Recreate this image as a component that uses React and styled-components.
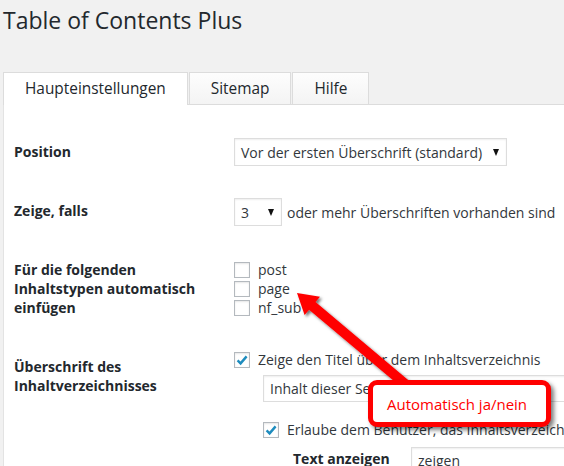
import React from "react";
import styled, { createGlobalStyle } from "styled-components";

const GlobalStyle = createGlobalStyle`
  html, body {
    margin: 0;
    padding: 0;
    background: #f1f1f1;
  }
  body {
    font-family: "Open Sans", "Noto Sans", sans-serif;
    color: #23282d;
  }
`;

function Checkbox({ checked }) {
  return (
    <Box>
      {checked && (
        <svg width="14" height="14" viewBox="0 0 14 14">
          <path
            d="M2.6 7.4 L5.6 10.4 L11.6 3.4"
            fill="none"
            stroke="#1e8cbe"
            strokeWidth="2.4"
          />
        </svg>
      )}
    </Box>
  );
}

function Select({ value, width }) {
  return (
    <SelectBox $width={width}>
      <span>{value}</span>
      <Caret />
    </SelectBox>
  );
}

function CheckLine({ checked, indent, top, children }) {
  return (
    <Line $indent={indent} $top={top}>
      <Checkbox checked={checked} />
      <span>{children}</span>
    </Line>
  );
}

export default function App() {
  return (
    <>
      <GlobalStyle />
      <Page>
        <Title>Table of Contents Plus</Title>

        <Tabs>
          <Tab $active>Haupteinstellungen</Tab>
          <Tab>Sitemap</Tab>
          <Tab>Hilfe</Tab>
        </Tabs>

        <Panel>
          <Row>
            <Label $top={22} $bottom={19}>Position</Label>
            <Field $top={18}>
              <Select value="Vor der ersten Überschrift (standard)" width={273} />
            </Field>
          </Row>

          <Row>
            <Label $top={21} $bottom={20}>Zeige, falls</Label>
            <Field $top={18}>
              <Inline>
                <Select value="3" width={48} />
                <Text>oder mehr Überschriften vorhanden sind</Text>
              </Inline>
            </Field>
          </Row>

          <Row>
            <Label $top={20} $bottom={20}>
              Für die folgenden
              <br />
              Inhaltstypen automatisch
              <br />
              einfügen
            </Label>
            <Field $top={20}>
              <CheckLine>post</CheckLine>
              <CheckLine>page</CheckLine>
              <CheckLine>nf_sub</CheckLine>
            </Field>
          </Row>

          <Row>
            <Label $top={20} $bottom={20}>
              Überschrift des
              <br />
              Inhaltverzeichnisses
            </Label>
            <Field $top={13}>
              <CheckLine checked>Zeige den Titel über dem Inhaltsverzeichnis</CheckLine>
              <TextInput $indent={29} $top={6} $width={330}>
                Inhalt dieser Seite
              </TextInput>
              <CheckLine checked indent={29} top={18}>
                Erlaube dem Benutzer, das Inhaltsverzeichnis zu verstecken
              </CheckLine>
              <SubRow>
                <SubLabel>Text anzeigen</SubLabel>
                <TextInput $width={200}>zeigen</TextInput>
              </SubRow>
            </Field>
          </Row>
        </Panel>

        <Arrow width="564" height="466" viewBox="0 0 564 466">
          <defs>
            <filter id="shadow" x="-20%" y="-20%" width="140%" height="140%">
              <feDropShadow dx="2" dy="2" stdDeviation="1.6" floodColor="#000" floodOpacity="0.55" />
            </filter>
          </defs>
          <polygon
            points="297,293 320,296.7 315.5,302.1 413.2,384.2 406.8,391.8 309.1,309.7 304.6,315.1"
            fill="#ff0000"
            filter="url(#shadow)"
          />
        </Arrow>

        <Callout>Automatisch ja/nein</Callout>
      </Page>
    </>
  );
}

const Page = styled.div`
  position: relative;
  width: 564px;
  height: 466px;
  overflow: hidden;
  display: flex;
  flex-direction: column;
  background: #f1f1f1;
`;

const Title = styled.h1`
  margin: 0;
  padding: 2px 0 0 3px;
  font-size: 23px;
  font-weight: 400;
  line-height: 36px;
  color: #23282d;
`;

const Tabs = styled.div`
  display: flex;
  gap: 1px;
  margin-top: 34px;
  padding-left: 3px;
  position: relative;
  z-index: 1;
`;

const Tab = styled.div`
  padding: 0 21px;
  font-size: 15.4px;
  line-height: 31px;
  color: #23282d;
  border: 1px solid #dcdcdc;
  border-bottom: none;
  background: ${(p) => (p.$active ? "#fff" : "linear-gradient(#fdfdfd, #f4f4f4)")};
  margin-bottom: ${(p) => (p.$active ? "-1px" : "0")};
  height: ${(p) => (p.$active ? "32px" : "31px")};
`;

const Panel = styled.div`
  flex: 1;
  margin-left: 3px;
  padding: 15px 0 0 10px;
  background: #fff;
  border-top: 1px solid #dcdcdc;
  border-left: 1px solid #e3e3e3;
`;

const Row = styled.div`
  display: grid;
  grid-template-columns: 220px 1fr;
  align-items: start;
`;

const Label = styled.div`
  padding-top: ${(p) => p.$top}px;
  padding-bottom: ${(p) => p.$bottom}px;
  font-size: 14px;
  font-weight: 700;
  line-height: 19px;
  color: #23282d;
`;

const Field = styled.div`
  padding-top: ${(p) => p.$top}px;
  font-size: 14px;
  line-height: 19px;
  color: #32373c;
  white-space: nowrap;
`;

const Inline = styled.div`
  display: flex;
  align-items: center;
`;

const Text = styled.span`
  margin-left: 5px;
`;

const SelectBox = styled.div`
  box-sizing: border-box;
  width: ${(p) => p.$width}px;
  height: 28px;
  display: flex;
  align-items: center;
  justify-content: space-between;
  padding: 0 7px 0 6px;
  border: 1px solid #ddd;
  background: #fff;
  box-shadow: inset 0 1px 2px rgba(0, 0, 0, 0.07);
  color: #32373c;
`;

const Caret = styled.span`
  width: 0;
  height: 0;
  border-left: 3.5px solid transparent;
  border-right: 3.5px solid transparent;
  border-top: 7px solid #111;
`;

const Line = styled.div`
  display: flex;
  align-items: center;
  gap: 8px;
  height: 19px;
  margin-left: ${(p) => p.$indent || 0}px;
  margin-top: ${(p) => p.$top || 0}px;
`;

const Box = styled.span`
  box-sizing: border-box;
  width: 16px;
  height: 16px;
  flex: none;
  display: flex;
  align-items: center;
  justify-content: center;
  border: 1px solid #b4b9be;
  background: #fff;
  box-shadow: inset 0 1px 2px rgba(0, 0, 0, 0.1);
`;

const TextInput = styled.div`
  box-sizing: border-box;
  width: ${(p) => p.$width}px;
  height: 27px;
  margin-left: ${(p) => p.$indent || 0}px;
  margin-top: ${(p) => p.$top || 0}px;
  padding: 0 6px;
  display: flex;
  align-items: center;
  border: 1px solid #ddd;
  background: #fff;
  box-shadow: inset 0 1px 2px rgba(0, 0, 0, 0.07);
  color: #32373c;
`;

const SubRow = styled.div`
  display: flex;
  align-items: flex-start;
  margin: 8px 0 0 59px;
`;

const SubLabel = styled.div`
  width: 118px;
  padding-top: 2px;
  font-weight: 700;
  color: #23282d;
`;

const Arrow = styled.svg`
  position: absolute;
  left: 0;
  top: 0;
  pointer-events: none;
`;

const Callout = styled.div`
  position: absolute;
  left: 368px;
  top: 380px;
  box-sizing: border-box;
  width: 183px;
  height: 47px;
  padding-left: 14px;
  display: flex;
  align-items: center;
  border: 5px solid #ff0000;
  border-radius: 9px;
  background: #fff;
  box-shadow: 3px 3px 4px rgba(0, 0, 0, 0.5);
  font-size: 15px;
  color: #ff0000;
  white-space: nowrap;
`;
